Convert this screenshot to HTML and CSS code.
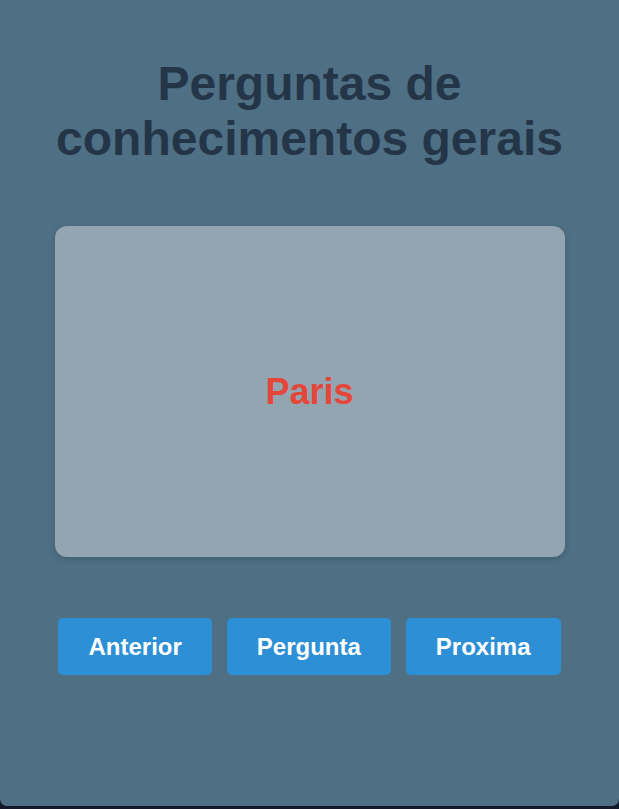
FILE: index.html
```html
<!DOCTYPE html>
<html lang="pt">
<head>
<meta charset="utf-8">
<title>Perguntas de conhecimentos gerais</title>
<link rel="stylesheet" href="styles.css">
</head>
<body>
<div class="panel">
  <h1 class="title">Perguntas de conhecimentos gerais</h1>
  <div class="card">
    <span class="answer">Paris</span>
  </div>
  <div class="controls">
    <button class="btn">Anterior</button>
    <button class="btn">Pergunta</button>
    <button class="btn">Proxima</button>
  </div>
</div>
</body>
</html>
```
FILE: styles.css
```css
html, body {
  margin: 0;
  padding: 0;
}
body {
  background: #14192a;
  font-family: "Liberation Sans", Arial, Helvetica, sans-serif;
  height: 809px;
  overflow: hidden;
}
.panel {
  background: #4e6f84;
  height: 806px;
  border-radius: 0 0 7px 7px;
  display: flex;
  flex-direction: column;
  align-items: center;
  box-sizing: border-box;
  padding-top: 56px;
}
.title {
  margin: 0;
  width: 520px;
  text-align: center;
  font-size: 48px;
  line-height: 55px;
  font-weight: bold;
  color: #253548;
}
.card {
  margin-top: 60px;
  width: 510px;
  height: 331px;
  background: #93a5b1;
  border-radius: 12px;
  box-shadow: 0 2px 6px rgba(0, 0, 0, 0.15);
  display: flex;
  align-items: center;
  justify-content: center;
}
.answer {
  color: #e4473a;
  font-size: 36px;
  font-weight: bold;
}
.controls {
  margin-top: 61px;
  display: flex;
  gap: 15px;
}
.btn {
  font-family: inherit;
  background: #2d8fd5;
  color: #ffffff;
  border: none;
  border-radius: 5px;
  padding: 15px 30px;
  font-size: 24px;
  font-weight: bold;
  line-height: 27px;
}
```
